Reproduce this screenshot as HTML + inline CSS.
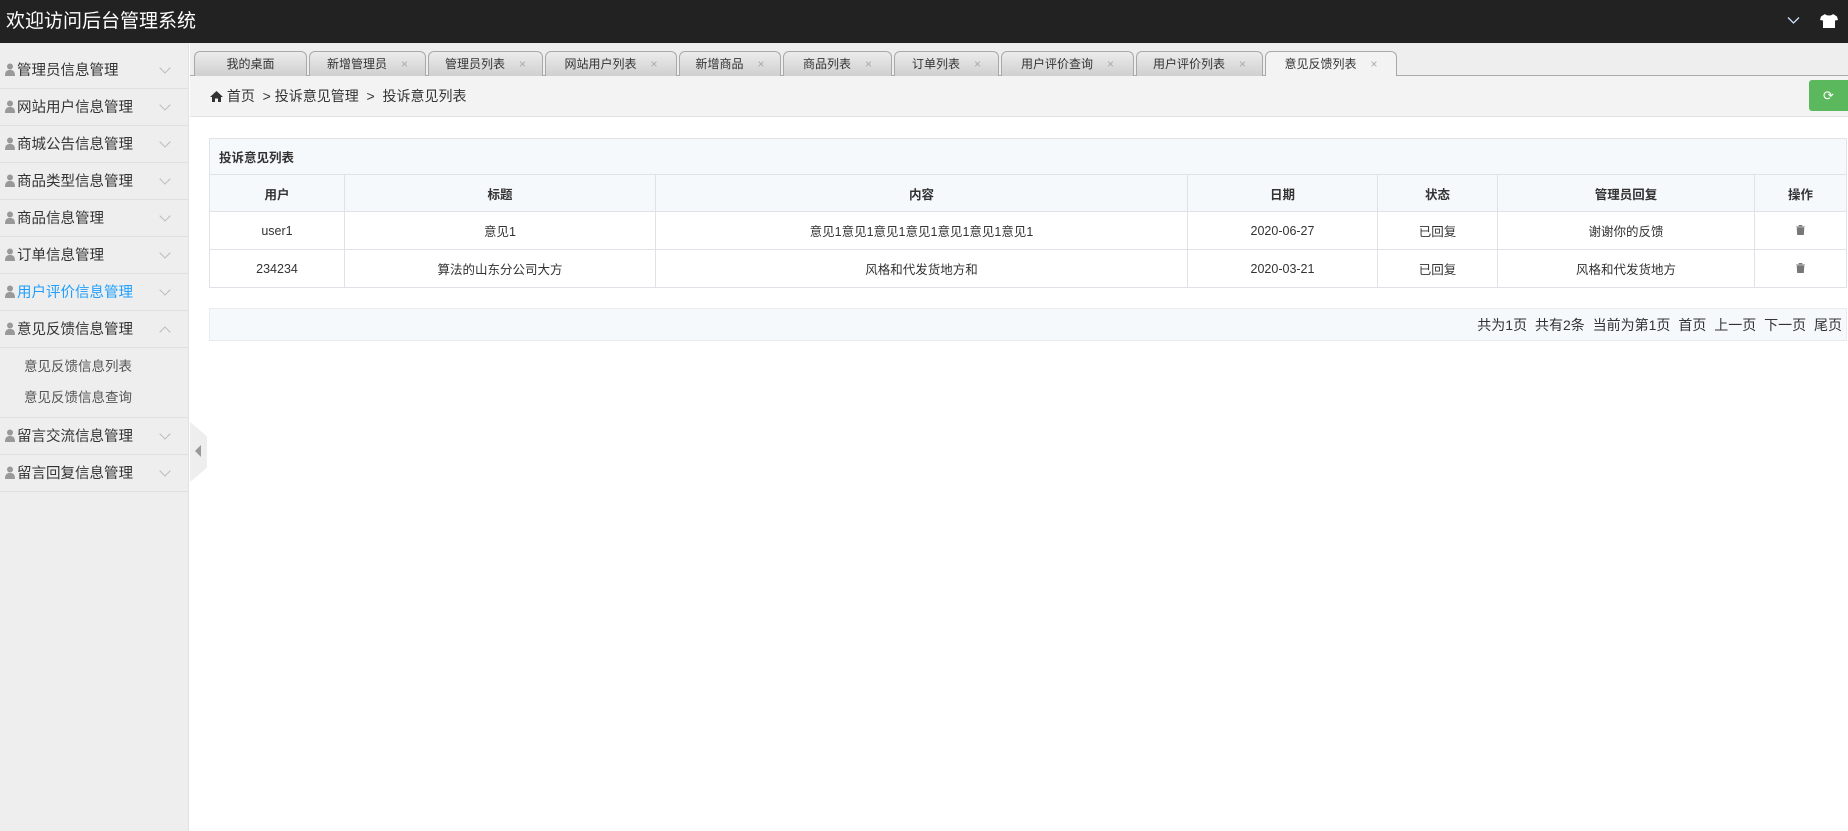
<!DOCTYPE html>
<html><head><meta charset="utf-8"><style>
*{margin:0;padding:0;box-sizing:border-box}
body{width:1848px;height:831px;overflow:hidden;background:#fff;font-family:"Liberation Sans","Noto Sans CJK SC",sans-serif;color:#333;position:relative}
.hd{position:absolute;left:0;top:0;width:1848px;height:43px;background:#222;color:#fff;font-size:19px;line-height:43px;padding-left:6px}
.sb{position:absolute;left:0;top:43px;width:189px;height:788px;background:#eee;border-right:1px solid #e2e2e2;padding-top:9px}
.it{height:37px;border-bottom:1px solid #e0e0e0;font-size:14.5px;line-height:39px;padding-left:5px;position:relative;color:#333}
.it .u{display:inline-block;width:10px;height:13px;vertical-align:-1px;margin-right:2px}
.it .ar{position:absolute;left:161px;top:12px;width:8px;height:8px;border-right:1px solid #bbb;border-bottom:1px solid #bbb;transform:rotate(45deg)}
.it .up{top:17px;transform:rotate(-135deg)}
.sub{font-size:13.5px;padding-left:24px;color:#555}
.tabs{position:absolute;left:190px;top:43px;width:1658px;height:33px;background:#eeeeef;border-bottom:1px solid #aaa}
.tab{position:absolute;top:8px;height:25px;font-size:12px;line-height:24px;text-align:center;color:#333;background:linear-gradient(#ececec,#cfcfcf);border:1px solid #a9a9a9;border-bottom:none;border-radius:6px 6px 0 0}
.tab span.x{color:#aaa;margin-left:14px;font-size:12px}
.tab.ac{background:#f3f3f3;height:26px}
.bc{position:absolute;left:190px;top:76px;width:1658px;height:41px;background:#f3f3f3;border-bottom:1px solid #e2e2e2;font-size:14px;line-height:40px;padding-left:20px;color:#333}
.gb{position:absolute;left:1809px;top:80px;width:39px;height:31px;background:#5cb85c;border-radius:3px 0 0 3px;color:#fff;text-align:center;line-height:31px;font-size:13px}
table{position:absolute;left:209px;top:138px;width:1638px;border-collapse:collapse;font-size:12.5px}
td,th{border:1px solid #dfe3e7;text-align:center;height:38px}
th{background:#f5f9fc;font-weight:bold;height:37px}
.tt{text-align:left;padding-left:9px;height:36px}
.pg{position:absolute;left:209px;top:308px;width:1638px;height:33px;background:#f5f9fc;border:1px solid #e8ecef;font-size:14px;line-height:32px;text-align:right;padding-right:4px;word-spacing:4px}
.hdl{position:absolute;left:190px;top:422px;width:17px;height:60px;background:#eee;clip-path:polygon(0 0,60% 14%,100% 24%,100% 76%,60% 86%,0 100%)}
</style></head><body>
<div class="hd">欢迎访问后台管理系统
<svg style="position:absolute;left:1787px;top:16px" width="13" height="9" viewBox="0 0 13 9"><path d="M1 1.5L6.5 7L12 1.5" fill="none" stroke="#cfe3ff" stroke-width="1.3"/></svg>
<svg style="position:absolute;left:1820px;top:14px" width="18" height="14" viewBox="0 0 18 14"><path d="M5 0L1 2.5L0 6L3 6.5V14H15V6.5L18 6L17 2.5L13 0C12 2 6 2 5 0Z" fill="#fff"/></svg>
</div>
<div class="sb">
<div class="it"><svg class="u" viewBox="0 0 10 13"><circle cx="5" cy="3.5" r="3" fill="#999"/><path d="M0 13C0 8 2 7 5 7S10 8 10 13Z" fill="#999"/></svg>管理员信息管理<i class="ar"></i></div>
<div class="it"><svg class="u" viewBox="0 0 10 13"><circle cx="5" cy="3.5" r="3" fill="#999"/><path d="M0 13C0 8 2 7 5 7S10 8 10 13Z" fill="#999"/></svg>网站用户信息管理<i class="ar"></i></div>
<div class="it"><svg class="u" viewBox="0 0 10 13"><circle cx="5" cy="3.5" r="3" fill="#999"/><path d="M0 13C0 8 2 7 5 7S10 8 10 13Z" fill="#999"/></svg>商城公告信息管理<i class="ar"></i></div>
<div class="it"><svg class="u" viewBox="0 0 10 13"><circle cx="5" cy="3.5" r="3" fill="#999"/><path d="M0 13C0 8 2 7 5 7S10 8 10 13Z" fill="#999"/></svg>商品类型信息管理<i class="ar"></i></div>
<div class="it"><svg class="u" viewBox="0 0 10 13"><circle cx="5" cy="3.5" r="3" fill="#999"/><path d="M0 13C0 8 2 7 5 7S10 8 10 13Z" fill="#999"/></svg>商品信息管理<i class="ar"></i></div>
<div class="it"><svg class="u" viewBox="0 0 10 13"><circle cx="5" cy="3.5" r="3" fill="#999"/><path d="M0 13C0 8 2 7 5 7S10 8 10 13Z" fill="#999"/></svg>订单信息管理<i class="ar"></i></div>
<div class="it" style="color:#1e9fff"><svg class="u" viewBox="0 0 10 13"><circle cx="5" cy="3.5" r="3" fill="#999"/><path d="M0 13C0 8 2 7 5 7S10 8 10 13Z" fill="#999"/></svg>用户评价信息管理<i class="ar"></i></div>
<div class="it"><svg class="u" viewBox="0 0 10 13"><circle cx="5" cy="3.5" r="3" fill="#999"/><path d="M0 13C0 8 2 7 5 7S10 8 10 13Z" fill="#999"/></svg>意见反馈信息管理<i class="ar up"></i></div>
<div class="sub" style="height:33px;line-height:37px">意见反馈信息列表</div>
<div class="sub" style="border-bottom:1px solid #e0e0e0;height:37px;line-height:33px">意见反馈信息查询</div>
<div class="it"><svg class="u" viewBox="0 0 10 13"><circle cx="5" cy="3.5" r="3" fill="#999"/><path d="M0 13C0 8 2 7 5 7S10 8 10 13Z" fill="#999"/></svg>留言交流信息管理<i class="ar"></i></div>
<div class="it"><svg class="u" viewBox="0 0 10 13"><circle cx="5" cy="3.5" r="3" fill="#999"/><path d="M0 13C0 8 2 7 5 7S10 8 10 13Z" fill="#999"/></svg>留言回复信息管理<i class="ar"></i></div>
</div>
<div class="hdl"></div>
<svg style="position:absolute;left:195px;top:445px" width="6" height="12"><path d="M6 0V12L0 6Z" fill="#999"/></svg>
<div class="tabs">
<div class="tab" style="left:4px;width:113px">我的桌面</div>
<div class="tab" style="left:119px;width:117px">新增管理员<span class="x">×</span></div>
<div class="tab" style="left:238px;width:115px">管理员列表<span class="x">×</span></div>
<div class="tab" style="left:355px;width:132px">网站用户列表<span class="x">×</span></div>
<div class="tab" style="left:489px;width:102px">新增商品<span class="x">×</span></div>
<div class="tab" style="left:593px;width:109px">商品列表<span class="x">×</span></div>
<div class="tab" style="left:704px;width:105px">订单列表<span class="x">×</span></div>
<div class="tab" style="left:811px;width:133px">用户评价查询<span class="x">×</span></div>
<div class="tab" style="left:946px;width:127px">用户评价列表<span class="x">×</span></div>
<div class="tab ac" style="left:1075px;width:132px">意见反馈列表<span class="x">×</span></div>
</div>
<div class="bc"><svg width="13" height="11" viewBox="0 0 13 11" style="vertical-align:-1px"><path d="M6.5 0L0 6H2V11H5V7.5H8V11H11V6H13Z" fill="#333"/></svg> 首页 &nbsp;&gt; 投诉意见管理 &nbsp;&gt; &nbsp;投诉意见列表</div>
<div class="gb">&#10227;</div>
<table>
<tr><th colspan="7" class="tt">投诉意见列表</th></tr>
<tr><th style="width:135px">用户</th><th style="width:311px">标题</th><th style="width:532px">内容</th><th style="width:190px">日期</th><th style="width:120px">状态</th><th style="width:257px">管理员回复</th><th>操作</th></tr>
<tr><td>user1</td><td>意见1</td><td>意见1意见1意见1意见1意见1意见1意见1</td><td>2020-06-27</td><td>已回复</td><td>谢谢你的反馈</td><td><svg width="9" height="10" viewBox="0 0 9 10"><path d="M0 1.5H9M3 1.5V0H6V1.5M1 2.5H8L7.5 10H1.5Z" fill="#777" stroke="#777" stroke-width=".6"/></svg></td></tr>
<tr><td>234234</td><td>算法的山东分公司大方</td><td>风格和代发货地方和</td><td>2020-03-21</td><td>已回复</td><td>风格和代发货地方</td><td><svg width="9" height="10" viewBox="0 0 9 10"><path d="M0 1.5H9M3 1.5V0H6V1.5M1 2.5H8L7.5 10H1.5Z" fill="#777" stroke="#777" stroke-width=".6"/></svg></td></tr>
</table>
<div class="pg">共为1页 共有2条 当前为第1页 首页 上一页 下一页 尾页</div>
</body></html>
